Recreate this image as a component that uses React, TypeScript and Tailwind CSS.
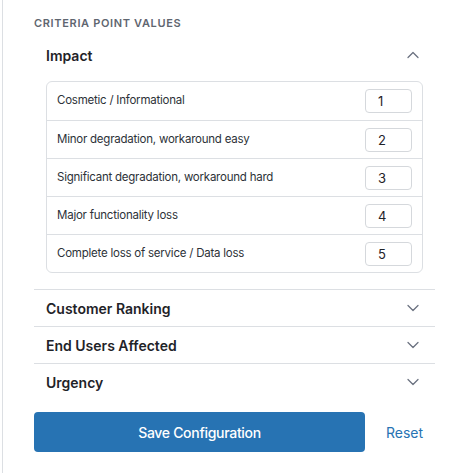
import { useState } from "react";
import { ChevronDown, ChevronUp } from "lucide-react";

interface Level {
    label: string;
    value: number;
}

const impactLevels: Level[] = [
    { label: "Cosmetic / Informational", value: 1 },
    { label: "Minor degradation, workaround easy", value: 2 },
    { label: "Significant degradation, workaround hard", value: 3 },
    { label: "Major functionality loss", value: 4 },
    { label: "Complete loss of service / Data loss", value: 5 },
];

const sections = ["Impact", "Customer Ranking", "End Users Affected", "Urgency"];

const App = () => {
    const [open, setOpen] = useState("Impact");
    const [values, setValues] = useState(impactLevels.map((l) => String(l.value)));

    return (
        <div
            className="min-h-screen bg-white pl-[2px] text-[#1f2328]"
            style={{ fontFamily: "Inter, 'Noto Sans', sans-serif" }}
        >
            <div className="min-h-[473px] border-l border-[#dcdfe3] pl-[31px] pr-[32px] pt-[15px]">
                <h3 className="mb-[6px] h-4 text-[11px] font-semibold leading-4 tracking-[0.06em] text-[#5f6670]">
                    CRITERIA POINT VALUES
                </h3>

                {sections.map((name, i) => {
                    const isOpen = open === name;
                    const last = i === sections.length - 1;
                    return (
                        <div
                            key={name}
                            className={last ? "" : "border-b border-[#dcdfe3]"}
                        >
                            <button
                                onClick={() => setOpen(isOpen ? "" : name)}
                                className="flex h-[36px] w-full items-center justify-between px-3 text-left"
                            >
                                <span className="text-[14px] font-semibold">{name}</span>
                                {isOpen ? (
                                    <ChevronUp size={20} strokeWidth={1.5} className="text-[#6b7280]" />
                                ) : (
                                    <ChevronDown size={20} strokeWidth={1.5} className="text-[#6b7280]" />
                                )}
                            </button>
                            {isOpen && name === "Impact" && (
                                <div className="px-3 pt-[8px] pb-[16px]">
                                    <div className="overflow-hidden rounded-md border border-[#dcdfe3]">
                                        {impactLevels.map((lvl, idx) => (
                                            <div
                                                key={lvl.label}
                                                className={`flex h-[38px] items-center justify-between px-[10px] ${
                                                    idx > 0 ? "border-t border-[#dcdfe3]" : ""
                                                }`}
                                            >
                                                <span className="text-[11.5px] tracking-[-0.02em] text-[#2d3238]">
                                                    {lvl.label}
                                                </span>
                                                <input
                                                    value={values[idx]}
                                                    onChange={(e) => {
                                                        const next = [...values];
                                                        next[idx] = e.target.value;
                                                        setValues(next);
                                                    }}
                                                    className="h-[24px] w-[47px] rounded border border-[#d5d8dc] px-3 text-[13px] text-[#1f2328] outline-none"
                                                />
                                            </div>
                                        ))}
                                    </div>
                                </div>
                            )}
                        </div>
                    );
                })}

                <div className="mt-[12px] flex items-center gap-[21px]">
                    <button className="h-[40px] w-[331px] rounded bg-[#2773b3] text-[14px] font-medium tracking-[-0.3px] text-white">
                        Save Configuration
                    </button>
                    <button className="text-[14px] text-[#2773b3]">Reset</button>
                </div>
            </div>
        </div>
    );
};

export default App;
